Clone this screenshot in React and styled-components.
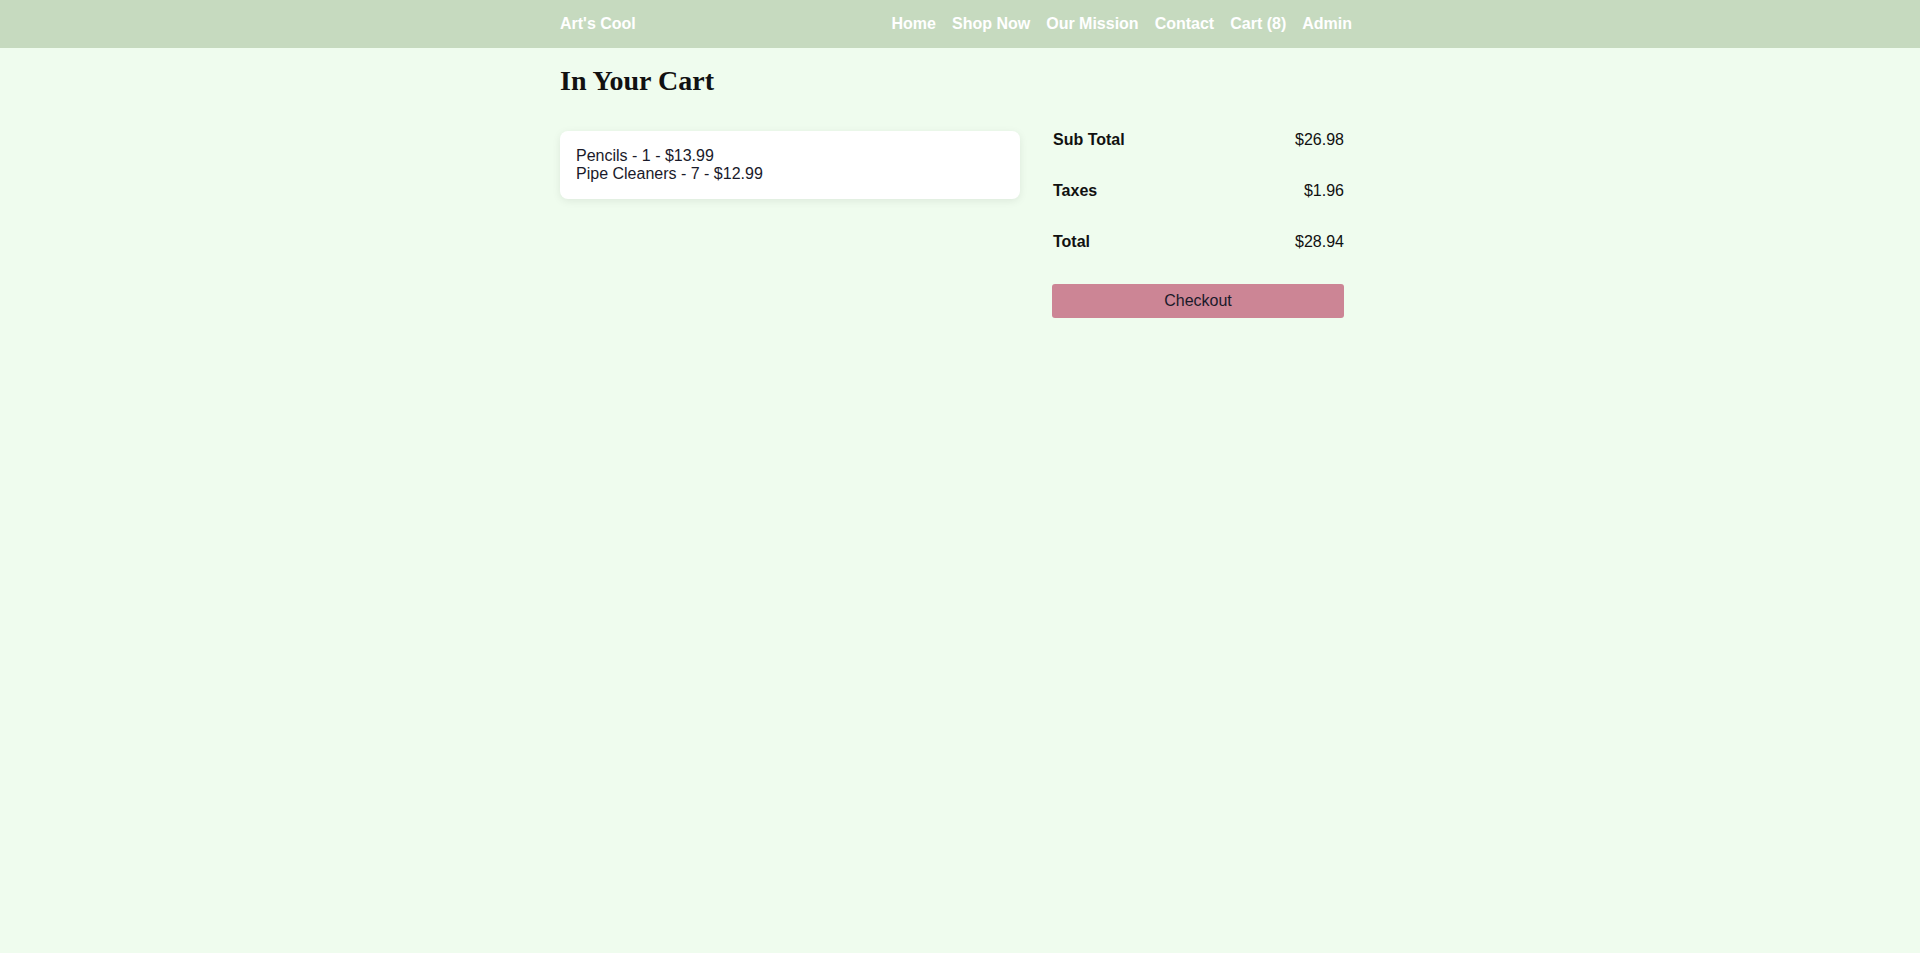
import React from "react";
import styled, { createGlobalStyle } from "styled-components";

const LINKS = ["Home", "Shop Now", "Our Mission", "Contact", "Cart (8)", "Admin"];

const ITEMS = [
  { id: 1, name: "Pencils", qty: 1, price: "$13.99" },
  { id: 2, name: "Pipe Cleaners", qty: 7, price: "$12.99" },
];

const TOTALS = [
  { label: "Sub Total", value: "$26.98" },
  { label: "Taxes", value: "$1.96" },
  { label: "Total", value: "$28.94" },
];

const App = () => {
  return (
    <>
      <GlobalStyle />
      <NavBar>
        <NavInner>
          <Brand>Art's Cool</Brand>
          <NavLinks>
            {LINKS.map((link) => (
              <NavLink key={link}>{link}</NavLink>
            ))}
          </NavLinks>
        </NavInner>
      </NavBar>
      <Page>
        <Title>In Your Cart</Title>
        <CartGrid>
          <ItemCard>
            {ITEMS.map((item) => (
              <div key={item.id}>
                {item.name} - {item.qty} - {item.price}
              </div>
            ))}
          </ItemCard>
          <Summary>
            {TOTALS.map((row) => (
              <SummaryRow key={row.label}>
                <Label>{row.label}</Label>
                <span>{row.value}</span>
              </SummaryRow>
            ))}
            <CheckoutButton>Checkout</CheckoutButton>
          </Summary>
        </CartGrid>
      </Page>
    </>
  );
};

export default App;

const GlobalStyle = createGlobalStyle`
  body {
    margin: 0;
    background: #effcee;
    font-family: "Liberation Sans", Arial, sans-serif;
    font-size: 16px;
    color: #111;
  }
`;

const NavBar = styled.nav`
  height: 48px;
  background: #c6dabf;
`;

const NavInner = styled.div`
  width: 800px;
  height: 100%;
  margin: 0 auto;
  display: flex;
  align-items: center;
  justify-content: space-between;
`;

const Brand = styled.span`
  color: #fff;
  font-weight: bold;
`;

const NavLinks = styled.div`
  display: flex;
`;

const NavLink = styled.a`
  color: #fff;
  font-weight: bold;
  padding: 0 8px;
  cursor: pointer;
`;

const Page = styled.main`
  width: 800px;
  margin: 0 auto;
  padding-top: 17px;
`;

const Title = styled.h1`
  margin: 0 0 34px;
  font-family: Georgia, "Liberation Serif", serif;
  font-size: 28px;
  font-weight: bold;
  color: #111;
`;

const CartGrid = styled.div`
  display: grid;
  grid-template-columns: 460px 292px;
  column-gap: 32px;
  align-items: start;
`;

const ItemCard = styled.div`
  background: #fff;
  border-radius: 8px;
  padding: 16px;
  box-shadow: 0 2px 8px rgba(0, 0, 0, 0.08);
  color: #1a1a2a;
`;

const Summary = styled.div`
  display: flex;
  flex-direction: column;
  gap: 33px;
`;

const SummaryRow = styled.div`
  display: flex;
  justify-content: space-between;
  padding-left: 1px;
`;

const Label = styled.span`
  font-weight: bold;
`;

const CheckoutButton = styled.button`
  height: 34px;
  border: none;
  border-radius: 3px;
  background: #cc8595;
  color: #1a1a2a;
  font-family: "Liberation Sans", Arial, sans-serif;
  font-size: 16px;
  cursor: pointer;
`;
